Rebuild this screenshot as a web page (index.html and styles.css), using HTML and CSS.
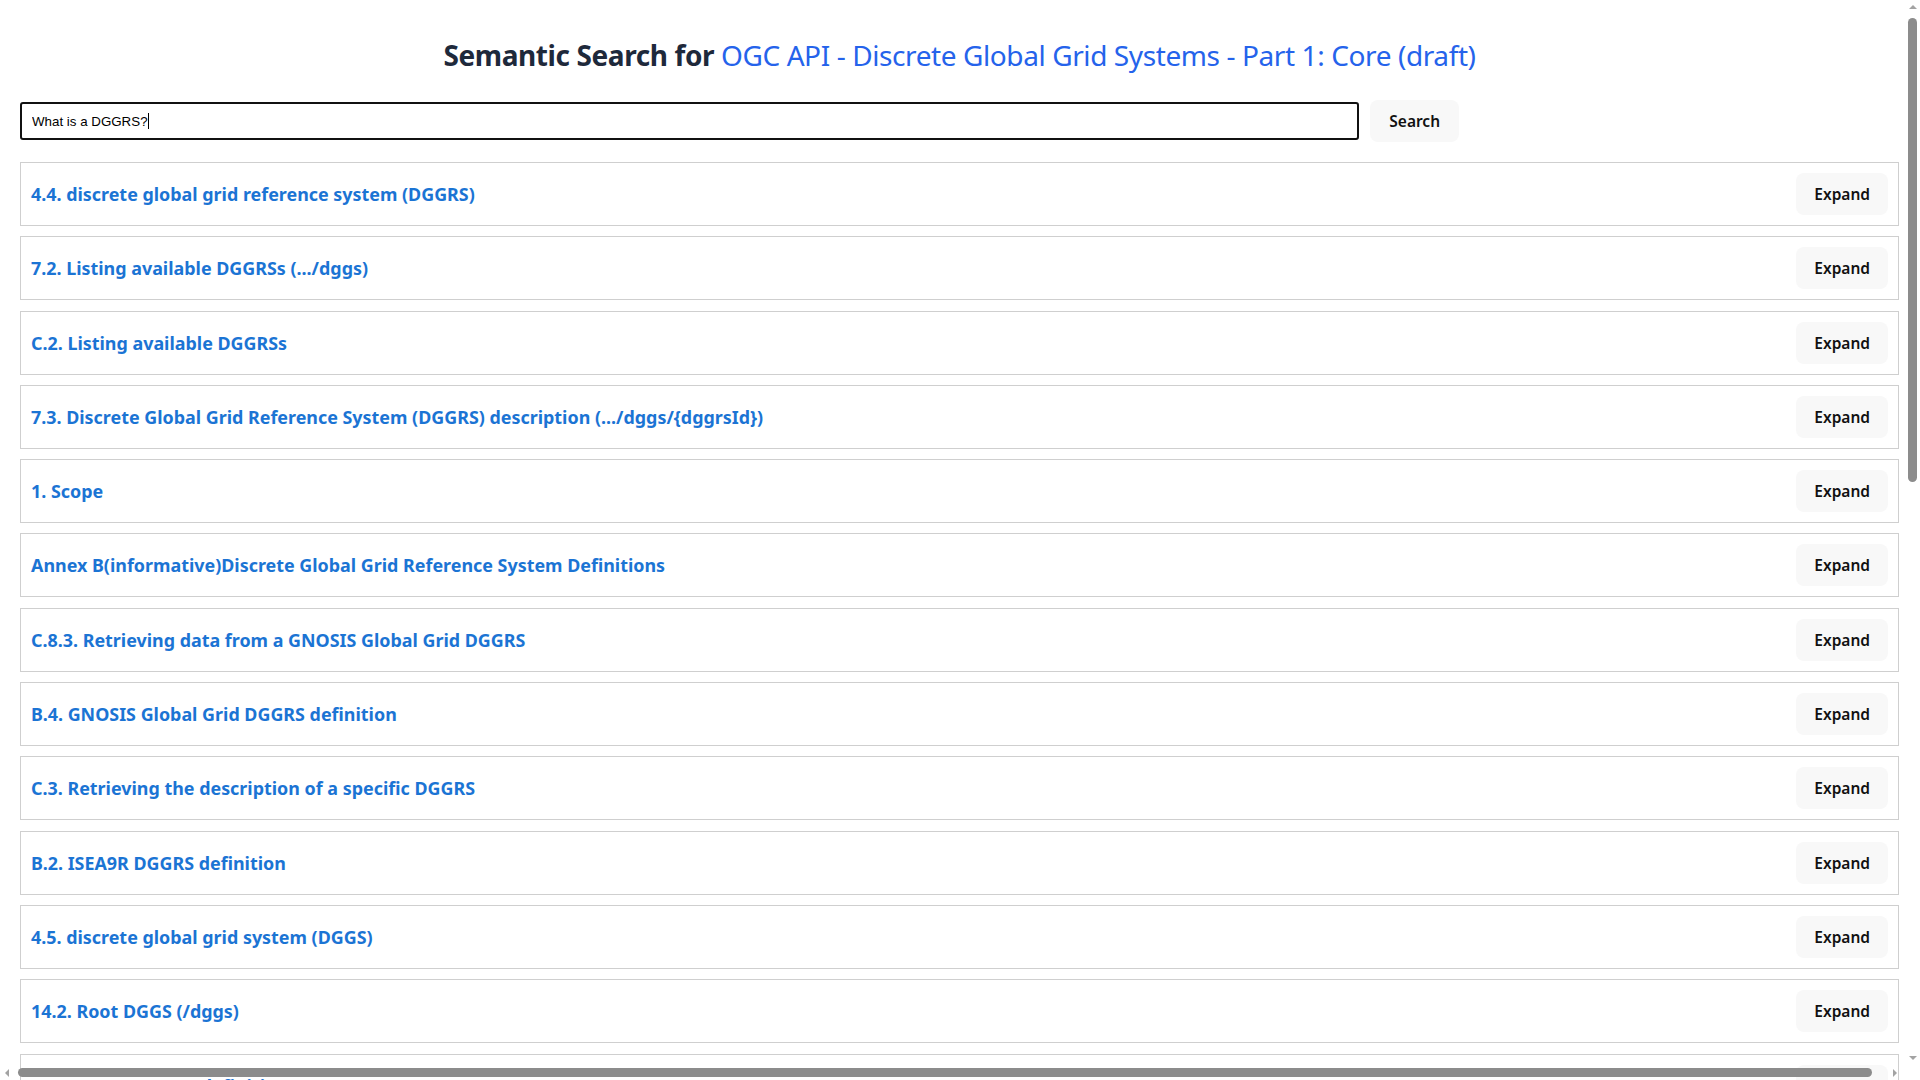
FILE: index.html
```html
<!DOCTYPE html>
<html lang="en">
<head>
<meta charset="utf-8">
<title>Semantic Search</title>
<link rel="stylesheet" href="styles.css">
</head>
<body>
<div class="page">
  <h1 class="title">Semantic Search for <span class="doc">OGC API - Discrete Global Grid Systems - Part 1: Core (draft)</span></h1>
  <form class="search-row" onsubmit="return false">
    <div class="input-wrap"><input class="search-input" type="text" value="What is a DGGRS?"><span class="caret"></span></div>
    <button class="btn btn-search" type="submit">Search</button>
  </form>
  <div class="results">
    <div class="result"><h3 class="result-title">4.4. discrete global grid reference system (DGGRS)</h3><button class="btn">Expand</button></div>
    <div class="result"><h3 class="result-title">7.2. Listing available DGGRSs (.../dggs)</h3><button class="btn">Expand</button></div>
    <div class="result"><h3 class="result-title">C.2. Listing available DGGRSs</h3><button class="btn">Expand</button></div>
    <div class="result"><h3 class="result-title">7.3. Discrete Global Grid Reference System (DGGRS) description (.../dggs/{dggrsId})</h3><button class="btn">Expand</button></div>
    <div class="result"><h3 class="result-title">1. Scope</h3><button class="btn">Expand</button></div>
    <div class="result"><h3 class="result-title">Annex B(informative)Discrete Global Grid Reference System Definitions</h3><button class="btn">Expand</button></div>
    <div class="result"><h3 class="result-title">C.8.3. Retrieving data from a GNOSIS Global Grid DGGRS</h3><button class="btn">Expand</button></div>
    <div class="result"><h3 class="result-title">B.4. GNOSIS Global Grid DGGRS definition</h3><button class="btn">Expand</button></div>
    <div class="result"><h3 class="result-title">C.3. Retrieving the description of a specific DGGRS</h3><button class="btn">Expand</button></div>
    <div class="result"><h3 class="result-title">B.2. ISEA9R DGGRS definition</h3><button class="btn">Expand</button></div>
    <div class="result"><h3 class="result-title">4.5. discrete global grid system (DGGS)</h3><button class="btn">Expand</button></div>
    <div class="result"><h3 class="result-title">14.2. Root DGGS (/dggs)</h3><button class="btn">Expand</button></div>
    <div class="result"><h3 class="result-title">B.3. ISEA3H DGGRS definition</h3><button class="btn">Expand</button></div>
    <div class="result"><h3 class="result-title">4.6. zone</h3><button class="btn">Expand</button></div>
    <div class="result"><h3 class="result-title">7.1. Overview</h3><button class="btn">Expand</button></div>
    <div class="result"><h3 class="result-title">B.1. Overview</h3><button class="btn">Expand</button></div>
    <div class="result"><h3 class="result-title">C.1. Overview</h3><button class="btn">Expand</button></div>
    <div class="result"><h3 class="result-title">4.7. zone identifier (ZoneID)</h3><button class="btn">Expand</button></div>
    <div class="result"><h3 class="result-title">8.2. Zone information (.../dggs/{dggrsId}/zones/{zoneId})</h3><button class="btn">Expand</button></div>
    <div class="result"><h3 class="result-title">9.1. Zone query (.../dggs/{dggrsId}/zones)</h3><button class="btn">Expand</button></div>
  </div>
</div>
<div class="vscroll" aria-hidden="true">
  <span class="arrow-up"></span>
  <span class="vthumb"></span>
  <span class="arrow-down"></span>
</div>
<div class="hscroll" aria-hidden="true">
  <span class="arrow-left"></span>
  <span class="hthumb"></span>
  <span class="arrow-right"></span>
</div>
</body>
</html>
```
FILE: styles.css
```css
html, body {
  margin: 0;
  padding: 0;
  background: #ffffff;
}

.page {
  width: calc(100vw - 41px);
  padding: 0 27px 20px 20px;
  font-family: "Noto Sans", "Open Sans", sans-serif;
}

.title {
  margin: 0;
  padding-top: 35px;
  font-size: 28px;
  font-weight: 700;
  letter-spacing: -0.4px;
  line-height: 40px;
  text-align: center;
  color: #1e293b;
}

.title .doc {
  font-weight: 400;
  color: #2563eb;
}

.search-row {
  display: flex;
  align-items: center;
  gap: 11px;
  margin: 25px 0 20px;
}

.input-wrap {
  position: relative;
  flex: none;
  width: calc(70% + 24px);
}

.search-input {
  box-sizing: border-box;
  width: 100%;
  height: 38px;
  padding: 0 10px;
  border: 2px solid #111111;
  border-radius: 3px;
  font-family: "Liberation Sans", Arial, sans-serif;
  font-size: 13.33px;
  color: #000000;
  outline: none;
}

.caret {
  position: absolute;
  left: 128px;
  top: 11px;
  width: 1px;
  height: 16px;
  background: #000000;
}

.btn {
  height: 42px;
  padding: 0 18px;
  border: none;
  border-radius: 8px;
  background: #f8f8f8;
  font-family: "Noto Sans", "Open Sans", sans-serif;
  font-size: 15.5px;
  font-weight: 600;
  color: #111111;
  cursor: pointer;
}

.btn-search {
  padding: 0 19px;
}

.results {
  display: flex;
  flex-direction: column;
  gap: 10.3px;
}

.result {
  display: flex;
  align-items: center;
  justify-content: space-between;
  padding: 10px;
  border: 1px solid #cfcfcf;
}

.result-title {
  margin: 0;
  font-size: 17.9px;
  font-weight: 700;
  color: #1b74d4;
}

/* drawn window scrollbars (overlay) */
.vscroll {
  position: fixed;
  top: 0;
  right: 0;
  width: 15px;
  height: calc(100vh - 15px);
}

.arrow-up,
.arrow-down {
  position: absolute;
  left: 4px;
  width: 0;
  height: 0;
  border-left: 4px solid transparent;
  border-right: 4px solid transparent;
}

.arrow-up {
  top: 5px;
  border-bottom: 4px solid #a3a3a3;
}

.arrow-down {
  bottom: 5px;
  border-top: 4px solid #a3a3a3;
}

.vthumb {
  position: absolute;
  top: 18px;
  left: 3px;
  width: 9px;
  height: 464px;
  border-radius: 5px;
  background: #8c8c8c;
}

.hscroll {
  position: fixed;
  left: 0;
  bottom: 0;
  width: calc(100vw - 15px);
  height: 15px;
}

.arrow-left,
.arrow-right {
  position: absolute;
  top: 4px;
  width: 0;
  height: 0;
  border-top: 4px solid transparent;
  border-bottom: 4px solid transparent;
}

.arrow-left {
  left: 5px;
  border-right: 4px solid #a3a3a3;
}

.arrow-right {
  right: 8px;
  border-left: 4px solid #a3a3a3;
}

.hthumb {
  position: absolute;
  top: 3px;
  left: 18px;
  width: 1854px;
  height: 9px;
  border-radius: 5px;
  background: #8c8c8c;
}
```
